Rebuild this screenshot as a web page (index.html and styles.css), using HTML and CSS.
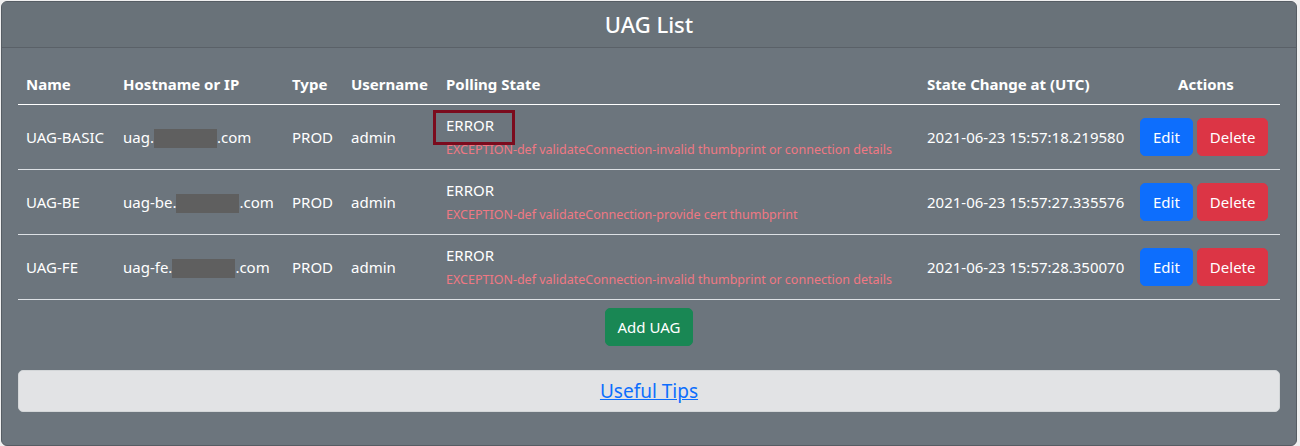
FILE: index.html
```html
<!DOCTYPE html>
<html lang="en">
<head>
<meta charset="utf-8">
<title>UAG List</title>
<link rel="stylesheet" href="styles.css">
</head>
<body>
<div class="card">
  <div class="card-header">UAG List</div>
  <div class="card-body">
    <table class="uag-table">
      <colgroup>
        <col class="c-name"><col class="c-host"><col class="c-type"><col class="c-user"><col class="c-state"><col class="c-time"><col class="c-actions">
      </colgroup>
      <thead>
        <tr>
          <th>Name</th>
          <th>Hostname or IP</th>
          <th>Type</th>
          <th>Username</th>
          <th>Polling State</th>
          <th>State Change at (UTC)</th>
          <th class="center">Actions</th>
        </tr>
      </thead>
      <tbody>
        <tr>
          <td>UAG-BASIC</td>
          <td>uag.<span class="redact"></span>.com</td>
          <td>PROD</td>
          <td>admin</td>
          <td>
            <div class="state"><span class="marked">ERROR</span></div>
            <div class="exception">EXCEPTION-def validateConnection-invalid thumbprint or connection details</div>
          </td>
          <td>2021-06-23 15:57:18.219580</td>
          <td class="actions"><button class="btn btn-primary">Edit</button><button class="btn btn-danger">Delete</button></td>
        </tr>
        <tr>
          <td>UAG-BE</td>
          <td>uag-be.<span class="redact"></span>.com</td>
          <td>PROD</td>
          <td>admin</td>
          <td>
            <div class="state">ERROR</div>
            <div class="exception">EXCEPTION-def validateConnection-provide cert thumbprint</div>
          </td>
          <td>2021-06-23 15:57:27.335576</td>
          <td class="actions"><button class="btn btn-primary">Edit</button><button class="btn btn-danger">Delete</button></td>
        </tr>
        <tr>
          <td>UAG-FE</td>
          <td>uag-fe.<span class="redact"></span>.com</td>
          <td>PROD</td>
          <td>admin</td>
          <td>
            <div class="state">ERROR</div>
            <div class="exception">EXCEPTION-def validateConnection-invalid thumbprint or connection details</div>
          </td>
          <td>2021-06-23 15:57:28.350070</td>
          <td class="actions"><button class="btn btn-primary">Edit</button><button class="btn btn-danger">Delete</button></td>
        </tr>
      </tbody>
    </table>
    <div class="add-row"><button class="btn btn-success">Add UAG</button></div>
    <div class="tips"><a href="#">Useful Tips</a></div>
  </div>
</div>
</body>
</html>
```
FILE: styles.css
```css
html, body {
  margin: 0;
  padding: 0;
}
body {
  background: #f0f0f0;
  padding: 1px 3px 0 1px;
  font-family: "Noto Sans", "Open Sans", sans-serif;
  font-size: 15px;
  color: #fff;
}
.card {
  background: #6c757d;
  border: 1px solid #565d64;
  border-radius: 6px;
  overflow: hidden;
}
.card-header {
  background: #697279;
  border-bottom: 1px solid #5a6168;
  padding: 8px 16px;
  height: 29px;
  line-height: 29px;
  text-align: center;
  font-size: 22px;
  font-weight: 500;
}
.card-body {
  padding: 16px 16px 33px;
}
.uag-table {
  width: 100%;
  border-collapse: collapse;
  table-layout: fixed;
  margin-bottom: 8px;
}
.c-name { width: 97px; }
.c-host { width: 169px; }
.c-type { width: 59px; }
.c-user { width: 95px; }
.c-state { width: 481px; }
.c-time { width: 213px; }
.uag-table th {
  text-align: left;
  font-weight: 700;
  padding: 8px;
  line-height: 24px;
  border-bottom: 1px solid #ffffff;
  white-space: nowrap;
}
.uag-table th.center { text-align: center; }
.uag-table td {
  padding: 8px;
  line-height: 24px;
  vertical-align: middle;
  border-bottom: 1px solid #dde1e5;
  white-space: nowrap;
}
.redact {
  display: inline-block;
  width: 63px;
  height: 19px;
  background: #5f5f5f;
  vertical-align: -5px;
}
.state {
  line-height: 24px;
}
.marked {
  position: relative;
}
.marked::after {
  content: "";
  position: absolute;
  left: -13px;
  top: -5px;
  width: 82px;
  height: 35px;
  border: 3px solid #7b0b1d;
  box-sizing: border-box;
}
.exception {
  font-size: 12.5px;
  line-height: 22px;
  color: #f07883;
  padding-top: 2px;
}
.actions .btn + .btn {
  margin-left: 4px;
}
.btn {
  font-family: inherit;
  font-size: 15px;
  color: #fff;
  border: 1px solid transparent;
  border-radius: 5px;
  padding: 0 12px;
  height: 38px;
  line-height: 36px;
  cursor: pointer;
}
.btn-primary { background: #0d6efd; border-color: #0d6efd; }
.btn-danger { background: #dc3545; border-color: #dc3545; }
.btn-success { background: #198754; border-color: #198754; }
.add-row {
  display: flex;
  justify-content: center;
  margin-bottom: 24px;
}
.tips {
  background: #e2e3e5;
  border: 1px solid #d3d6d8;
  border-radius: 5px;
  text-align: center;
  padding: 5px;
  line-height: 30px;
  font-size: 19px;
}
.tips a {
  color: #0d6efd;
  text-decoration: underline;
}
```
